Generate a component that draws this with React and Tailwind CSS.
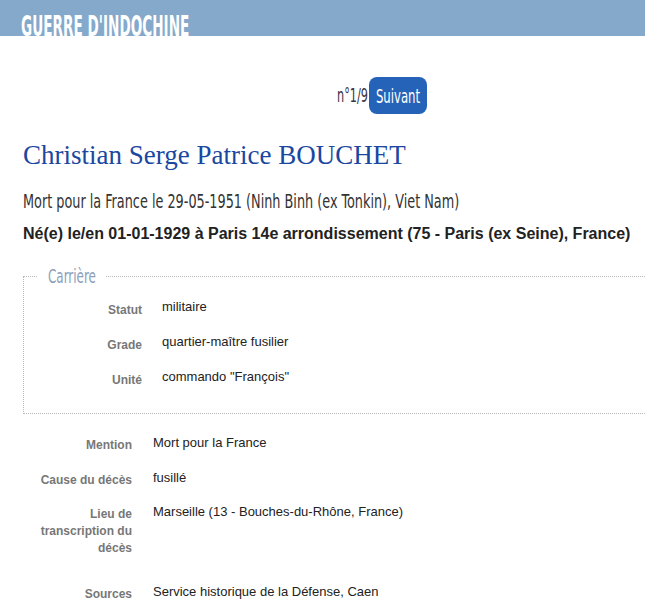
export default function App() {
  const cond = { fontFamily: '"Liberation Sans Narrow", "DejaVu Sans Condensed", "Liberation Sans", sans-serif' };
  const arial = { fontFamily: '"Liberation Sans", Arial, sans-serif' };
  return (
    <div className="w-[645px] h-[615px] overflow-hidden bg-white relative">
      <div className="h-[36px] bg-[#84a9cb] overflow-hidden pl-[21px]">
        <div className="pt-[12px] text-[28px] leading-[30px] font-bold text-white whitespace-nowrap origin-left scale-x-[0.54]" style={cond}>
          GUERRE D'INDOCHINE
        </div>
      </div>

      <div className="flex items-center mt-[41px] ml-[337px]">
        <span className="w-[32px] whitespace-nowrap" style={cond}>
          <span className="text-[19px] text-[#3b3344] inline-block origin-left scale-x-[0.66]">n°1/9</span>
        </span>
        <span className="h-[37px] w-[58px] rounded-[8px] bg-[#2563b8] flex items-center justify-center">
          <span className="text-[20px] text-white inline-block scale-x-[0.65]" style={cond}>Suivant</span>
        </span>
      </div>

      <div className="pl-[23px]">
        <h1 className="mt-[25px] text-[27px] leading-[32px] text-[#1a47a0]" style={{ fontFamily: '"Liberation Serif", "DejaVu Serif", serif' }}>
          Christian Serge Patrice BOUCHET
        </h1>
        <div className="mt-[18px] text-[20px] leading-[24px] text-[#333] whitespace-nowrap origin-left scale-x-[0.713]" style={cond}>
          Mort pour la France le 29-05-1951 (Ninh Binh (ex Tonkin), Viet Nam)
        </div>
        <div className="mt-[11px] text-[16px] leading-[20px] font-bold text-[#222] whitespace-nowrap" style={arial}>
          Né(e) le/en 01-01-1929 à Paris 14e arrondissement (75 - Paris (ex Seine), France)
        </div>

        <fieldset className="mt-[20px] w-[660px] border border-dotted border-[#b8b8b8] pl-[14px] pb-[22px] relative">
          <legend className="px-[10px] text-[20px] leading-[24px] text-[#8ca0b8]" style={cond}>
            <span className="inline-block scale-x-[0.665] origin-left w-[48px] whitespace-nowrap">Carrière</span>
          </legend>
          <div className="flex flex-col gap-[10px] mt-[8px]" style={arial}>
            {[
              ['Statut', 'militaire'],
              ['Grade', 'quartier-maître fusilier'],
              ['Unité', 'commando "François"'],
            ].map(([k, v]) => (
              <div key={k} className="flex leading-[22px]">
                <div className="w-[104px] text-right text-[12px] font-semibold text-[#777] pt-[3px]">{k}</div>
                <div className="pl-[20px] text-[13px] text-[#222]">{v}</div>
              </div>
            ))}
          </div>
        </fieldset>

        <div className="flex flex-col mt-[20px]" style={arial}>
          {[
            ['Mention', 'Mort pour la France', 'h-[35px]'],
            ['Cause du décès', 'fusillé', 'h-[34px]'],
            ['Lieu de transcription du décès', 'Marseille (13 - Bouches-du-Rhône, France)', 'h-[80px]'],
            ['Sources', 'Service historique de la Défense, Caen', 'h-[35px]'],
          ].map(([k, v, h]) => (
            <div key={k} className={`flex leading-[17px] ${h}`}>
              <div className="w-[109px] text-right text-[12px] font-semibold text-[#777] pt-[3px] pl-[12px]">{k}</div>
              <div className="pl-[21px] text-[13px] text-[#222]">{v}</div>
            </div>
          ))}
        </div>
      </div>
    </div>
  );
}
